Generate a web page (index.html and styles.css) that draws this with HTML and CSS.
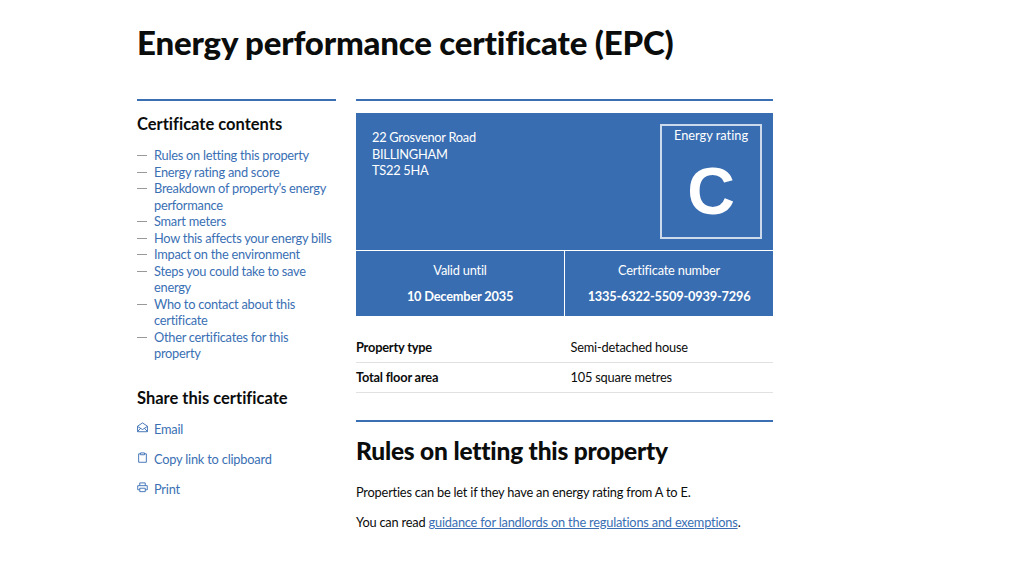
FILE: index.html
```html
<!DOCTYPE html>
<html lang="en">
<head>
<meta charset="utf-8">
<title>Energy performance certificate (EPC)</title>
<link rel="stylesheet" href="styles.css">
</head>
<body>
<main class="page">
  <h1 class="title">Energy performance certificate (EPC)</h1>
  <div class="columns">
    <aside class="side">
      <h2 class="side-heading">Certificate contents</h2>
      <ul class="contents">
        <li><a href="#">Rules on letting this property</a></li>
        <li><a href="#">Energy rating and score</a></li>
        <li><a href="#">Breakdown of property’s energy performance</a></li>
        <li><a href="#">Smart meters</a></li>
        <li><a href="#">How this affects your energy bills</a></li>
        <li><a href="#">Impact on the environment</a></li>
        <li><a href="#">Steps you could take to save energy</a></li>
        <li><a href="#">Who to contact about this certificate</a></li>
        <li><a href="#">Other certificates for this property</a></li>
      </ul>
      <h2 class="side-heading share-heading">Share this certificate</h2>
      <ul class="share">
        <li><svg class="icon" viewBox="0 0 12 12"><path d="M.6 4.6 6 1l5.400 3.600v6H.6zM.6 4.800 6 8.200l5.400-3.400M.6 10.400l3.400-3.600M11.400 10.400 8 6.800"/></svg><a href="#">Email</a></li>
        <li><svg class="icon" viewBox="0 0 12 12"><path d="M3.500 2H1.800v9.200h8.400V2H8.500M3.800 1h4.400v2H3.800z"/></svg><a href="#">Copy link to clipboard</a></li>
        <li><svg class="icon" viewBox="0 0 12 12"><path d="M3 4V1h6v3M3 8.500H.8V4h10.400v4.500H9M3 6.800h6v3.700H3z"/></svg><a href="#">Print</a></li>
      </ul>
    </aside>
    <section class="content">
      <div class="summary">
        <div class="summary-top">
          <p class="address">22 Grosvenor Road<br>BILLINGHAM<br>TS22 5HA</p>
          <div class="rating">
            <span class="rating-label">Energy rating</span>
            <span class="rating-letter">C</span>
          </div>
        </div>
        <div class="summary-bottom">
          <div class="summary-cell"><span>Valid until</span><strong>10 December 2035</strong></div>
          <div class="summary-cell"><span>Certificate number</span><strong>1335-6322-5509-0939-7296</strong></div>
        </div>
      </div>
      <dl class="facts">
        <div class="fact"><dt>Property type</dt><dd>Semi-detached house</dd></div>
        <div class="fact"><dt>Total floor area</dt><dd>105 square metres</dd></div>
      </dl>
      <h2 class="section-title">Rules on letting this property</h2>
      <p class="body">Properties can be let if they have an energy rating from A to E.</p>
      <p class="body">You can read <a href="#">guidance for landlords on the regulations and exemptions</a>.</p>
    </section>
  </div>
</main>
</body>
</html>
```
FILE: styles.css
```css
* { box-sizing: border-box; }
html, body { margin: 0; padding: 0; background: #fff; }
body { font-family: Lato, "Liberation Sans", sans-serif; font-variant-ligatures: none; font-size: 12.8px; letter-spacing: -0.2px; color: #0b0c0c; height: 561px; overflow: hidden; }
.page { width: 636px; margin-left: 137px; padding-top: 23px; }
.title { margin: 0 0 38px; font-size: 33px; line-height: 38px; font-weight: 900; letter-spacing: -0.2px; }
.columns { display: flex; gap: 20px; align-items: flex-start; }
.side { width: 199px; flex: none; border-top: 2px solid #3a6fb4; padding-top: 13px; }
.side-heading { margin: 0; font-size: 16.5px; line-height: 20px; font-weight: 700; letter-spacing: 0; }
.contents { list-style: none; margin: 13px 0 0; padding: 0; letter-spacing: -0.25px; }
.contents li { position: relative; padding-left: 17px; line-height: 16.5px; }
.contents li::before { content: ""; position: absolute; left: 0; top: 8px; width: 10px; height: 1px; background: #999; }
a { color: #3a6fb4; }
.side a { text-decoration: none; }
.share-heading { margin-top: 26px; }
.share { list-style: none; margin: 13px 0 0; padding: 0; }
.share li { display: flex; align-items: flex-start; height: 30px; line-height: 16px; }
.icon { width: 11px; height: 11px; margin-right: 6px; margin-top: 1px; fill: none; stroke: #3a6fb4; stroke-width: 1; }
.content { flex: 1; border-top: 2px solid #3a6fb4; padding-top: 12px; }
.summary { background: #386db1; color: #fff; }
.summary-top { display: flex; justify-content: space-between; height: 137px; padding: 11px 11px 11px 16px; }
.address { margin: 5px 0 0; line-height: 16.5px; letter-spacing: -0.25px; }
.rating { width: 102px; height: 115px; border: 2px solid rgba(255, 255, 255, 0.75); display: flex; flex-direction: column; align-items: center; }
.rating-label { line-height: 18px; letter-spacing: 0; }
.rating-letter { font-family: "Liberation Sans", sans-serif; font-weight: 700; font-size: 66px; line-height: 80px; margin-top: 7px; letter-spacing: 0; }
.summary-bottom { display: flex; border-top: 1px solid #fff; height: 66px; }
.summary-cell { flex: 1; display: flex; flex-direction: column; align-items: center; line-height: 16px; padding-top: 11px; }
.summary-cell + .summary-cell { border-left: 1px solid #fff; }
.summary-cell strong { margin-top: 10px; }
.facts { margin: 17px 0 0; }
.fact { display: flex; height: 30px; padding-top: 6px; border-bottom: 1px solid #e1e1e1; line-height: 16px; }
.fact dt { width: 214.5px; font-weight: 700; }
.fact dd { margin: 0; }
.section-title { margin: 27px 0 0; padding-top: 14px; border-top: 2px solid #3a6fb4; font-size: 24.5px; line-height: 30px; font-weight: 900; letter-spacing: -0.2px; }
.body { margin: 0; line-height: 16px; padding-top: 14px; }
.section-title + .body { padding-top: 18px; }
```
